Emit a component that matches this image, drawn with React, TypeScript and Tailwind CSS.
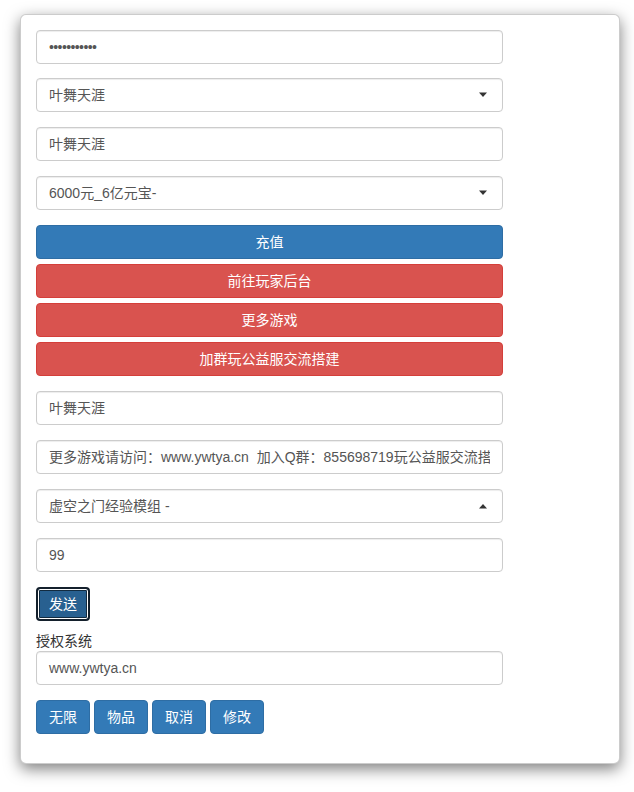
import React from "react";

const font = { fontFamily: '"Liberation Sans", "Noto Sans CJK SC", sans-serif' };

function Field({ children, className = "" }: { children: React.ReactNode; className?: string }) {
  return (
    <div
      className={`w-[467px] h-[34px] border border-[#ccc] rounded-[4px] bg-white px-[12px] flex items-center text-[14px] text-[#555] overflow-hidden whitespace-nowrap shadow-[inset_0_1px_1px_rgba(0,0,0,0.075)] ${className}`}
    >
      {children}
    </div>
  );
}

function Select({ text, up = false, className = "" }: { text: string; up?: boolean; className?: string }) {
  return (
    <Field className={`justify-between ${className}`}>
      <span>{text}</span>
      <svg width="10" height="6" viewBox="0 0 10 6" className="mr-[2px]">
        {up ? <polygon points="1,5.5 9,5.5 5,1" fill="#333" /> : <polygon points="1,0.5 9,0.5 5,5" fill="#333" />}
      </svg>
    </Field>
  );
}

function BlockBtn({ text, color, className = "" }: { text: string; color: "blue" | "red"; className?: string }) {
  const c =
    color === "blue"
      ? "bg-[#337ab7] border-[#2e6da4]"
      : "bg-[#d9534f] border-[#d43f3a]";
  return (
    <div
      className={`w-[467px] h-[34px] border rounded-[4px] ${c} text-white text-[14px] flex items-center justify-center ${className}`}
    >
      {text}
    </div>
  );
}

function SmallBtn({ text }: { text: string }) {
  return (
    <div className="w-[54px] h-[34px] border border-[#2e6da4] bg-[#337ab7] rounded-[4px] text-white text-[14px] flex items-center justify-center">
      {text}
    </div>
  );
}

export default function App() {
  return (
    <div className="w-[634px] h-[792px] bg-white" style={font}>
      <div className="pt-[14px] pl-[20px]">
        <div className="w-[600px] h-[750px] bg-white border border-[rgba(0,0,0,0.2)] rounded-[6px] shadow-[0_5px_15px_rgba(0,0,0,0.5)] px-[15px] pt-[15px]">
          <Field className="text-[12px] tracking-[-0.6px] text-[#555]">•••••••••••</Field>
          <Select text="叶舞天涯" className="mt-[14px]" />
          <Field className="mt-[15px]">叶舞天涯</Field>
          <Select text="6000元_6亿元宝-" className="mt-[15px]" />
          <BlockBtn text="充值" color="blue" className="mt-[15px]" />
          <BlockBtn text="前往玩家后台" color="red" className="mt-[5px]" />
          <BlockBtn text="更多游戏" color="red" className="mt-[5px]" />
          <BlockBtn text="加群玩公益服交流搭建" color="red" className="mt-[5px]" />
          <Field className="mt-[15px]">叶舞天涯</Field>
          <Field className="mt-[15px]">
            <span className="block w-full overflow-hidden">更多游戏请访问：www.ywtya.cn&nbsp; 加入Q群：855698719玩公益服交流搭</span>
          </Field>
          <Select text="虚空之门经验模组 -" up className="mt-[15px]" />
          <Field className="mt-[15px]">99</Field>
          <div className="mt-[15px] w-[54px] h-[34px] rounded-[4px] border-[2px] border-[#14202c] bg-[#286090] shadow-[inset_0_0_0_1px_#fff,inset_0_0_0_2px_#122b40] text-white text-[14px] flex items-center justify-center">
            发送
          </div>
          <div className="mt-[10px] h-[20px] leading-[20px] text-[14px] text-[#333]">授权系统</div>
          <Field>www.ywtya.cn</Field>
          <div className="mt-[15px] flex gap-[4px]">
            <SmallBtn text="无限" />
            <SmallBtn text="物品" />
            <SmallBtn text="取消" />
            <SmallBtn text="修改" />
          </div>
        </div>
      </div>
    </div>
  );
}
